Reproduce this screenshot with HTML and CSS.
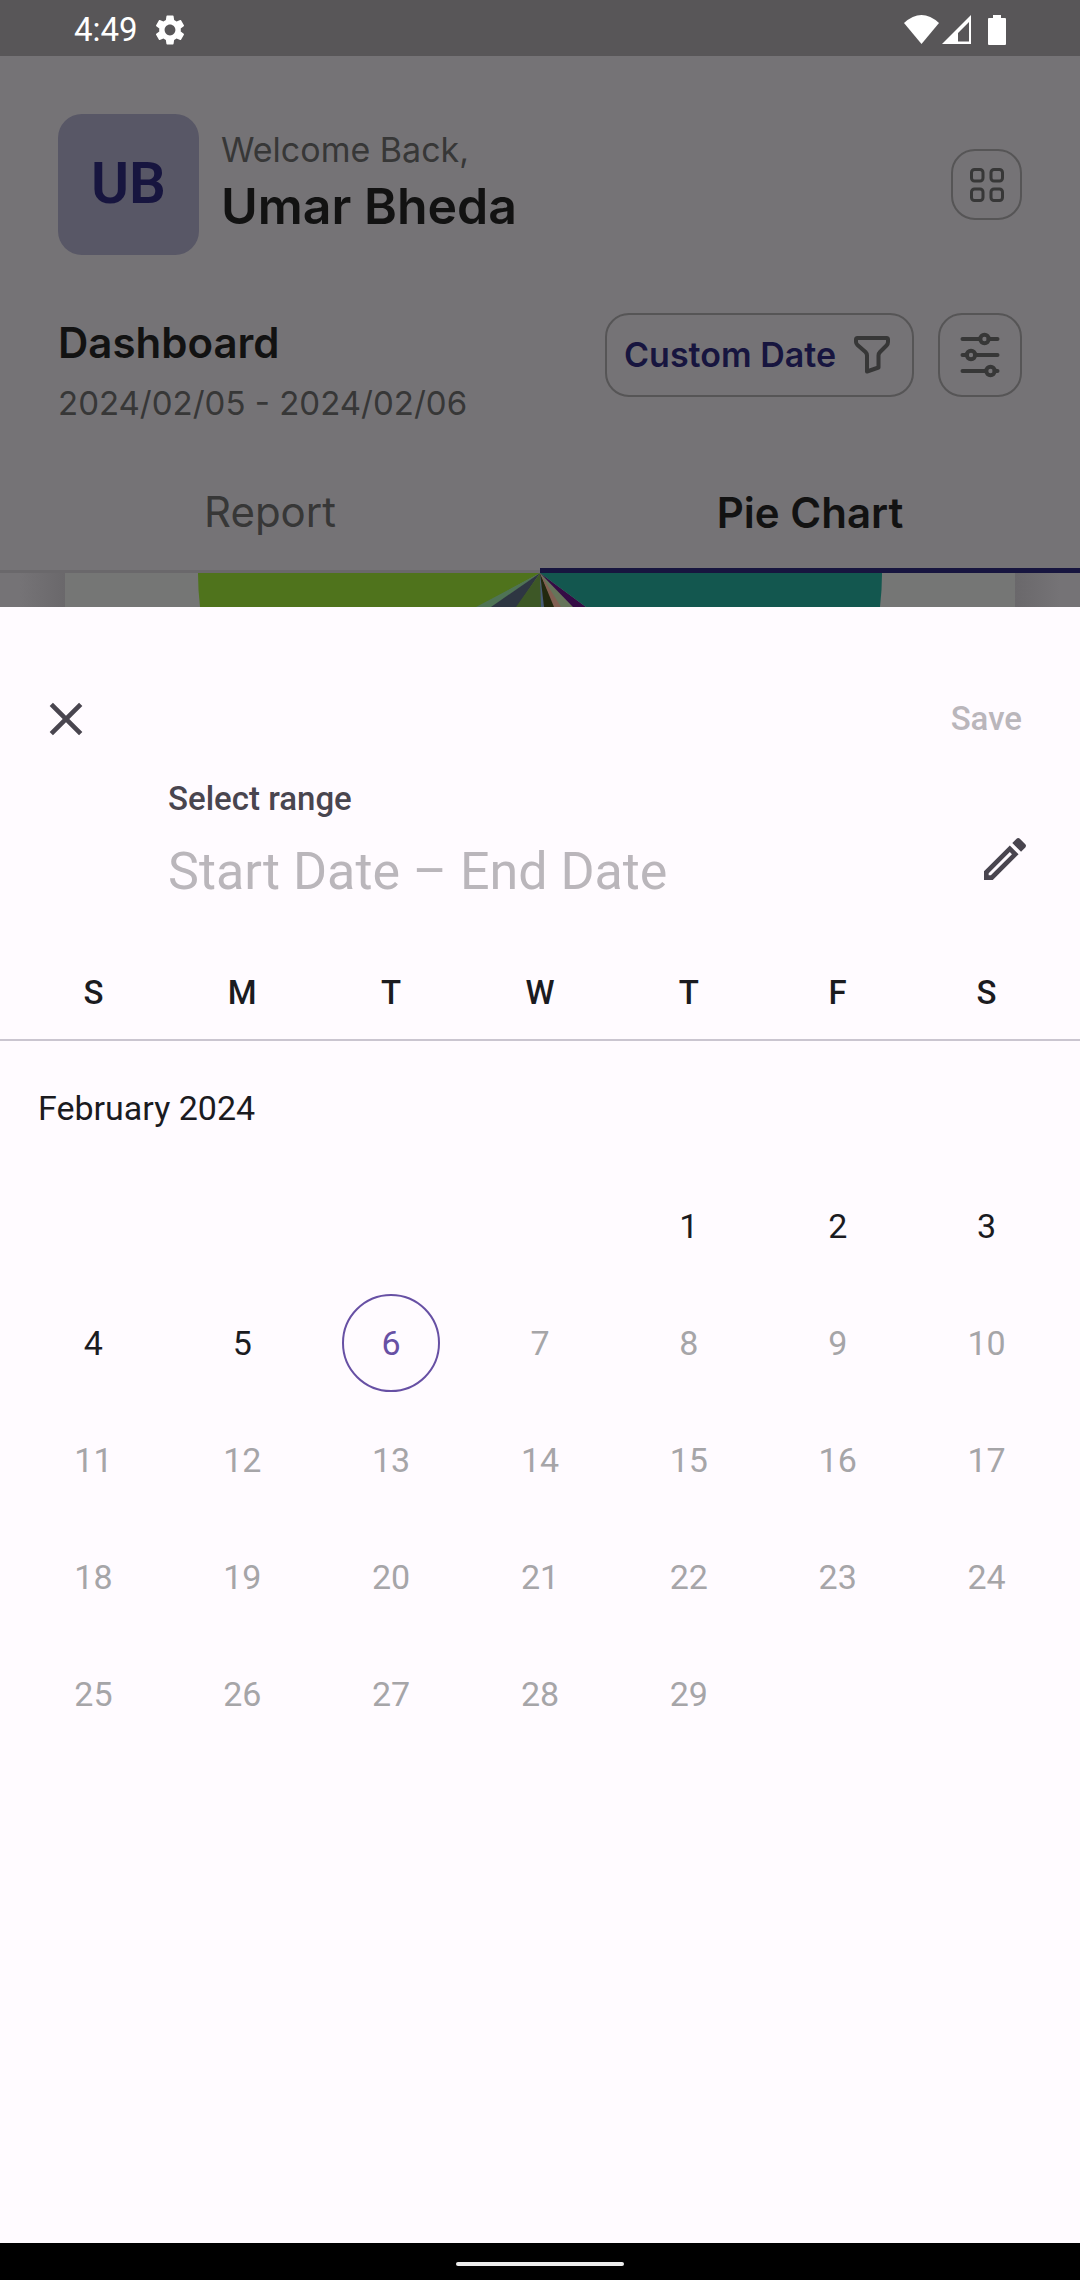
FILE: index.html
```html
<!DOCTYPE html>
<html lang="en">
<head>
<meta charset="utf-8">
<meta name="viewport" content="width=device-width, initial-scale=1">
<title>Dashboard - Select range</title>
<link rel="stylesheet" href="styles.css">
</head>
<body>
<div class="screen">
  <div class="status">
    <span class="status-time">4:49</span>
    <svg class="status-gear" viewBox="2 2 20 20" aria-hidden="true"><path fill="currentColor" d="M19.14 12.94c.04-.3.06-.61.06-.94 0-.32-.02-.64-.07-.94l2.03-1.58a.49.49 0 0 0 .12-.61l-1.92-3.32a.488.488 0 0 0-.59-.22l-2.39.96c-.5-.38-1.03-.7-1.62-.94l-.36-2.54a.484.484 0 0 0-.48-.41h-3.84c-.24 0-.43.17-.47.41l-.36 2.54c-.59.24-1.13.57-1.62.94l-2.39-.96c-.22-.08-.47 0-.59.22L2.74 8.87c-.12.21-.08.47.12.61l2.03 1.58c-.05.3-.09.63-.09.94s.02.64.07.94l-2.03 1.58a.49.49 0 0 0-.12.61l1.92 3.32c.12.22.37.29.59.22l2.39-.96c.5.38 1.03.7 1.62.94l.36 2.54c.05.24.24.41.48.41h3.84c.24 0 .44-.17.47-.41l.36-2.54c.59-.24 1.13-.56 1.62-.94l2.39.96c.22.08.47 0 .59-.22l1.92-3.32c.12-.22.07-.47-.12-.61l-2.01-1.58zM12 15.6c-1.98 0-3.6-1.62-3.6-3.6s1.62-3.6 3.6-3.6 3.6 1.62 3.6 3.6-1.62 3.6-3.6 3.6z"/></svg>
    <svg class="status-signals" viewBox="0 0 102 30" aria-hidden="true">
      <path fill="currentColor" d="M0 8Q17.500-8 35 8L17.500 29Z"/>
      <path fill="currentColor" fill-rule="evenodd" d="M38 29 67 0V29ZM54 18V26.500H65V7Z"/>
      <path fill="currentColor" d="M89 0h8v3h4q1 0 1 1V29q0 1-1 1H85q-1 0-1-1V4q0-1 1-1h4Z"/>
    </svg>
  </div>

  <header class="profile">
    <div class="avatar">UB</div>
    <div class="greeting">
      <p class="welcome">Welcome Back,</p>
      <h1 class="name">Umar Bheda</h1>
    </div>
    <button class="outline-btn menu-btn" type="button" aria-label="Menu">
      <svg class="menu-icon" viewBox="0 0 34 34" fill="none" stroke="currentColor" stroke-width="3" aria-hidden="true">
        <rect x="1.500" y="1.500" width="11.500" height="11.500" rx="3"/><rect x="21" y="1.500" width="11.500" height="11.500" rx="3"/>
        <rect x="1.500" y="21" width="11.500" height="11.500" rx="3"/><rect x="21" y="21" width="11.500" height="11.500" rx="3"/>
      </svg>
    </button>
  </header>

  <section class="toolbar">
    <div class="heading">
      <h2 class="title">Dashboard</h2>
      <p class="period">2024/02/05 - 2024/02/06</p>
    </div>
    <button class="outline-btn date-btn" type="button">Custom Date
      <svg class="filter-icon" viewBox="0 0 36 38" fill="none" stroke="currentColor" stroke-width="4" stroke-linejoin="round" aria-hidden="true"><path d="M3.500 2H32.500Q34 2 34 3.500V6Q34 8 32.500 9.500L26 16Q24.500 17.500 24.500 19.500V31.500L13 35.500V19.500Q13 17.500 11.500 16L3.500 9Q2 7.500 2 6V3.500Q2 2 3.500 2Z"/></svg>
    </button>
    <button class="outline-btn tune-btn" type="button" aria-label="Filters">
      <svg class="tune-icon" viewBox="0 0 40 46" fill="none" stroke="currentColor" stroke-width="4" stroke-linecap="round" aria-hidden="true">
        <path d="M2.500 7H20M28.500 7H37.500M2.500 23H7M15 23H37.500M2.500 39H26M34.500 39H37.500"/>
        <circle cx="24.500" cy="7" r="4.200"/><circle cx="11" cy="23" r="4.200"/><circle cx="30.500" cy="39" r="4.200"/>
      </svg>
    </button>
  </section>

  <nav class="tabs" role="tablist">
    <button class="tab" type="button" role="tab" aria-selected="false">Report</button>
    <button class="tab tab-active" type="button" role="tab" aria-selected="true">Pie Chart</button>
  </nav>

  <div class="chart">
    <div class="chart-card">
      <svg class="pie" viewBox="0 0 686 34" aria-hidden="true">
        <path fill="#4f731c" d="M1 0H343L281 34H3Q1 16 1 0Z"/>
        <path fill="#4f7355" d="M343 0 279 34H295Z"/>
        <path fill="#2e3642" d="M343 0 294 34H320Z"/>
        <path fill="#3d5726" d="M343 0 319 34H345Z"/>
        <path fill="#475b75" d="M343 0 344 34H348Z"/>
        <path fill="#22280f" d="M343 0 347 34H358Z"/>
        <path fill="#825f52" d="M343 0 357 34H365Z"/>
        <path fill="#66745a" d="M343 0 364 34H377Z"/>
        <path fill="#350b45" d="M343 0 376 34H389Z"/>
        <path fill="#13574f" d="M343 0H685Q685 16 683 34H389Z"/>
      </svg>
    </div>
  </div>

  <main class="sheet">
    <div class="sheet-bar">
      <button class="icon-btn" type="button" aria-label="Close"><svg class="icon" viewBox="0 0 24 24" aria-hidden="true"><path fill="currentColor" d="M19 6.410 17.590 5 12 10.590 6.410 5 5 6.410 10.590 12 5 17.590 6.410 19 12 13.410 17.590 19 19 17.590 13.410 12Z"/></svg></button>
      <button class="save" type="button" disabled>Save</button>
    </div>
    <div class="range">
      <div class="range-text">
        <p class="range-label">Select range</p>
        <p class="range-value">Start Date – End Date</p>
      </div>
      <button class="icon-btn edit" type="button" aria-label="Edit dates"><svg class="icon" viewBox="0 0 24 24" aria-hidden="true"><path fill="currentColor" d="m14.060 9.020.92.92L5.920 19H5v-.92l9.060-9.060M17.660 3c-.25 0-.51.1-.7.290l-1.830 1.830 3.750 3.750 1.830-1.830c.39-.39.39-1.020 0-1.410l-2.340-2.340c-.2-.2-.45-.29-.71-.29zm-3.600 3.190L3 17.250V21h3.750L17.810 9.940l-3.750-3.750z"/></svg></button>
    </div>
    <div class="weekdays"><span>S</span><span>M</span><span>T</span><span>W</span><span>T</span><span>F</span><span>S</span></div>
    <h3 class="month">February 2024</h3>
    <div class="days">
      <button class="day first" type="button">1</button><button class="day" type="button">2</button><button class="day" type="button">3</button>
      <button class="day" type="button">4</button><button class="day" type="button">5</button><button class="day today" type="button" aria-current="date">6</button><button class="day" type="button" disabled>7</button><button class="day" type="button" disabled>8</button><button class="day" type="button" disabled>9</button><button class="day" type="button" disabled>10</button>
      <button class="day" type="button" disabled>11</button><button class="day" type="button" disabled>12</button><button class="day" type="button" disabled>13</button><button class="day" type="button" disabled>14</button><button class="day" type="button" disabled>15</button><button class="day" type="button" disabled>16</button><button class="day" type="button" disabled>17</button>
      <button class="day" type="button" disabled>18</button><button class="day" type="button" disabled>19</button><button class="day" type="button" disabled>20</button><button class="day" type="button" disabled>21</button><button class="day" type="button" disabled>22</button><button class="day" type="button" disabled>23</button><button class="day" type="button" disabled>24</button>
      <button class="day" type="button" disabled>25</button><button class="day" type="button" disabled>26</button><button class="day" type="button" disabled>27</button><button class="day" type="button" disabled>28</button><button class="day" type="button" disabled>29</button>
    </div>
  </main>

  <footer class="system-nav"><span class="handle"></span></footer>
</div>
</body>
</html>
```
FILE: styles.css
```css
:root {
  --dim-bg: #757376;
  --dim-ink: #121212;
  --dim-grey: #373737;
  --dim-navy: #17153f;
  --dim-line: #565556;
  --surface: #fffbff;
  --ink: #1b1b1f;
  --ink-soft: #49454f;
  --muted: #bab6bb;
  --accent: #6750a4;
}

* { box-sizing: border-box; }

body, h1, h2, h3, p { margin: 0; }

button {
  margin: 0;
  padding: 0;
  border: 0;
  background: none;
  color: inherit;
  font: inherit;
}

svg { display: block; flex: none; }

.screen {
  display: flex;
  flex-direction: column;
  min-height: 100vh;
  background: var(--dim-bg);
  color: var(--dim-ink);
  font-family: Inter, "Liberation Sans", sans-serif;
  font-size: 34px;
  line-height: 40px;
}

/* System status bar */
.status {
  display: flex;
  align-items: center;
  height: 56px;
  padding: 3px 74px 0;
  background: #585658;
  color: #fff;
  font-family: Roboto, sans-serif;
  font-size: 33px;
}
.status-gear { width: 30px; height: 30px; margin-left: 17px; }
.status-signals { width: 102px; height: 30px; margin-left: auto; }

/* Dimmed dashboard */
.profile {
  display: flex;
  align-items: center;
  padding: 58px 58px 0;
}
.avatar {
  display: flex;
  align-items: center;
  justify-content: center;
  width: 141px;
  height: 141px;
  padding-bottom: 4px;
  border-radius: 24px;
  background: #585766;
  color: var(--dim-navy);
  font-family: Roboto, sans-serif;
  font-size: 58px;
  font-weight: 600;
}
.greeting { flex: 1; margin-left: 22px; padding-bottom: 6px; }
.welcome { color: var(--dim-grey); line-height: 48px; }
.name { font-size: 50px; font-weight: 600; line-height: 64px; }

.outline-btn {
  display: flex;
  align-items: center;
  justify-content: center;
  border: 2px solid var(--dim-line);
  border-radius: 24px;
  color: var(--dim-grey);
}
.menu-btn { width: 71px; height: 71px; }
.menu-icon { width: 34px; height: 34px; }

.toolbar {
  display: flex;
  align-items: flex-start;
  gap: 24px;
  padding: 58px 58px 0;
}
.heading { flex: 1; }
.title { font-size: 42px; font-weight: 600; line-height: 60px; }
.period { color: var(--dim-grey); font-size: 33px; line-height: 60px; }
.date-btn {
  gap: 18px;
  height: 84px;
  padding: 0 22px 0 17px;
  color: var(--dim-navy);
  font-weight: 600;
}
.filter-icon { width: 36px; height: 38px; color: var(--dim-grey); }
.tune-btn { width: 84px; height: 84px; }
.tune-icon { width: 40px; height: 46px; }

.tabs { display: flex; margin-top: 20px; }
.tab {
  flex: 1;
  height: 120px;
  border-bottom: 3px solid #6a686b;
  color: var(--dim-grey);
  font-size: 42px;
}
.tab-active {
  padding-top: 4px;
  border-bottom: 5px solid var(--dim-navy);
  color: var(--dim-ink);
  font-weight: 600;
}

.chart {
  height: 34px;
  padding: 0 65px;
  overflow: hidden;
  background: linear-gradient(90deg, #757376 20px, #6a686b 65px, #6a686b calc(100% - 65px), #757376 calc(100% - 20px));
}
.chart-card { display: flex; justify-content: center; background: #757675; }
.pie { width: 686px; height: 34px; }

/* Date range sheet */
.sheet {
  flex: 1;
  padding-top: 80px;
  background: var(--surface);
  color: var(--ink);
  font-family: Roboto, sans-serif;
}
.sheet-bar {
  display: flex;
  align-items: center;
  justify-content: space-between;
  height: 64px;
  padding: 0 58px 0 38px;
}
.icon-btn { color: var(--ink-soft); }
.icon { width: 56px; height: 56px; }
.save { color: var(--muted); font-size: 33px; font-weight: 500; }

.range {
  display: flex;
  justify-content: space-between;
  margin-top: 28px;
  padding: 0 47px 0 168px;
}
.range-label { color: var(--ink-soft); font-size: 33px; font-weight: 500; }
.range-value { margin-top: 21px; color: var(--muted); font-size: 52px; line-height: 64px; }
.edit { align-self: flex-start; margin-top: 52px; }

.weekdays, .days {
  display: grid;
  grid-template-columns: repeat(7, 1fr);
  padding: 0 19px;
  text-align: center;
}
.weekdays {
  margin-top: 69px;
  padding-bottom: 26px;
  border-bottom: 2px solid #cac5d0;
  font-size: 33px;
  font-weight: 500;
}
.month { margin: 47px 38px 0; font-size: 34px; font-weight: 400; }
.days { margin-top: 39px; grid-auto-rows: 117px; }
.day { place-self: center; width: 98px; height: 98px; border-radius: 50%; }
.day.first { grid-column: 5; }
.day:disabled { color: #a6a5a8; }
.today { border: 2px solid var(--accent); color: var(--accent); }

/* Gesture navigation */
.system-nav {
  display: flex;
  align-items: center;
  justify-content: center;
  height: 37px;
  padding-top: 5px;
  background: #000;
}
.handle { width: 168px; height: 4px; border-radius: 2px; background: #ececec; }
```
